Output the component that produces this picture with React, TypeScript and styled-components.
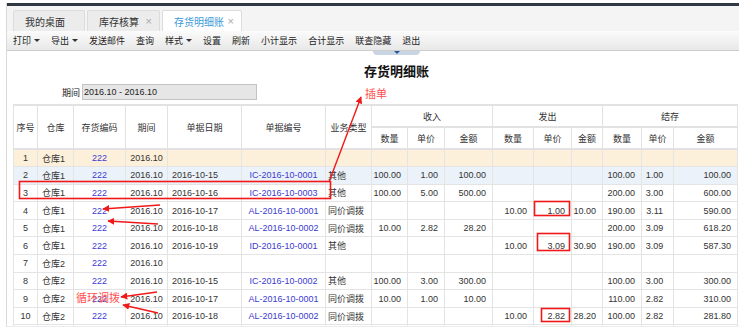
import React from 'react'
import styled, { createGlobalStyle } from 'styled-components'

const GlobalStyle = createGlobalStyle`
  html, body {
    margin: 0;
    padding: 0;
    background: #fff;
  }
  body {
    font-family: "Liberation Sans", "Noto Sans CJK SC", sans-serif;
    color: #333;
  }
`

type Tone = 'beige' | 'blue' | undefined

type Row = {
  no: string
  store: string
  date?: string
  bill?: string
  kind?: string
  nums?: string[]
  tone?: Tone
}

const rows: Row[] = [
  { no: '1', store: '仓库1', tone: 'beige' },
  { no: '2', store: '仓库1', date: '2016-10-15', bill: 'IC-2016-10-0001', kind: '其他', nums: ['100.00', '1.00', '100.00', '', '', '', '100.00', '1.00', '100.00'], tone: 'blue' },
  { no: '3', store: '仓库1', date: '2016-10-16', bill: 'IC-2016-10-0003', kind: '其他', nums: ['100.00', '5.00', '500.00', '', '', '', '200.00', '3.00', '600.00'] },
  { no: '4', store: '仓库1', date: '2016-10-17', bill: 'AL-2016-10-0001', kind: '同价调拨', nums: ['', '', '', '10.00', '1.00', '10.00', '190.00', '3.11', '590.00'] },
  { no: '5', store: '仓库1', date: '2016-10-18', bill: 'AL-2016-10-0002', kind: '同价调拨', nums: ['10.00', '2.82', '28.20', '', '', '', '200.00', '3.09', '618.20'] },
  { no: '6', store: '仓库1', date: '2016-10-19', bill: 'ID-2016-10-0001', kind: '其他', nums: ['', '', '', '10.00', '3.09', '30.90', '190.00', '3.09', '587.30'] },
  { no: '7', store: '仓库2' },
  { no: '8', store: '仓库2', date: '2016-10-15', bill: 'IC-2016-10-0002', kind: '其他', nums: ['100.00', '3.00', '300.00', '', '', '', '100.00', '3.00', '300.00'] },
  { no: '9', store: '仓库2', date: '2016-10-17', bill: 'AL-2016-10-0001', kind: '同价调拨', nums: ['10.00', '1.00', '10.00', '', '', '', '110.00', '2.82', '310.00'] },
  { no: '10', store: '仓库2', date: '2016-10-18', bill: 'AL-2016-10-0002', kind: '同价调拨', nums: ['', '', '', '10.00', '2.82', '28.20', '100.00', '2.82', '281.80'] },
]

const colWidths = [24, 36, 52, 42, 74, 84, 46, 36, 37, 48, 41, 38, 31, 39, 32, 64]

const tools = [
  { label: '打印', menu: true },
  { label: '导出', menu: true },
  { label: '发送邮件' },
  { label: '查询' },
  { label: '样式', menu: true },
  { label: '设置' },
  { label: '刷新' },
  { label: '小计显示' },
  { label: '合计显示' },
  { label: '联查隐藏' },
  { label: '退出' },
]

const App = () => {
  return (
    <Page>
      <GlobalStyle />
      <Frame>
        <TopBar />
        <TabBar>
          <Tab $width={72}>我的桌面</Tab>
          <Tab $width={73}>
            库存核算<Close>×</Close>
          </Tab>
          <Tab $width={80} $active>
            存货明细账<Close>×</Close>
          </Tab>
        </TabBar>
        <Toolbar>
          {tools.map((tool) => (
            <ToolItem key={tool.label}>
              {tool.label}
              {tool.menu && <Caret />}
            </ToolItem>
          ))}
        </Toolbar>
        <HandleRow>
          <Handle>
            <HandleArrow />
          </Handle>
        </HandleRow>

        <Content>
          <Title>存货明细账</Title>
          <PeriodRow>
            <PeriodLabel>期间</PeriodLabel>
            <PeriodInput>2016.10 - 2016.10</PeriodInput>
          </PeriodRow>

          <Grid>
            <colgroup>
              {colWidths.map((w, i) => (
                <col key={i} style={{ width: w }} />
              ))}
            </colgroup>
            <thead>
              <tr>
                <Head rowSpan={2}>序号</Head>
                <Head rowSpan={2}>仓库</Head>
                <Head rowSpan={2}>存货编码</Head>
                <Head rowSpan={2}>期间</Head>
                <Head rowSpan={2}>单据日期</Head>
                <Head rowSpan={2}>单据编号</Head>
                <Head rowSpan={2}>业务类型</Head>
                <Head colSpan={3}>收入</Head>
                <Head colSpan={3}>发出</Head>
                <Head colSpan={3}>结存</Head>
              </tr>
              <tr>
                {['收入', '发出', '结存'].map((g) => (
                  <React.Fragment key={g}>
                    <Head>数量</Head>
                    <Head>单价</Head>
                    <Head>金额</Head>
                  </React.Fragment>
                ))}
              </tr>
            </thead>
            <tbody>
              {rows.map((r) => (
                <BodyRow key={r.no} $tone={r.tone}>
                  <Cell $align="center">{r.no}</Cell>
                  <Cell>{r.store}</Cell>
                  <Cell $align="center" $link>222</Cell>
                  <Cell $align="center">2016.10</Cell>
                  <Cell>{r.date}</Cell>
                  <Cell $align="center" $link>{r.bill}</Cell>
                  <Cell $tight>{r.kind}</Cell>
                  {(r.nums || ['', '', '', '', '', '', '', '', '']).map((n, i) => (
                    <Cell key={i} $align={i === 7 ? 'center' : 'right'} $num>
                      {n}
                    </Cell>
                  ))}
                </BodyRow>
              ))}
              <BodyRow>
                {colWidths.map((_, i) => (
                  <Cell key={i} />
                ))}
              </BodyRow>
            </tbody>
          </Grid>
        </Content>
      </Frame>

      <Marks width="739" height="336" viewBox="0 0 739 336">
        <defs>
          <marker id="head" viewBox="0 0 10 10" refX="9" refY="5" markerWidth="5" markerHeight="5" orient="auto">
            <path d="M0 0 L10 5 L0 10 z" fill="#f01818" />
          </marker>
        </defs>
        <rect x="19.5" y="181.5" width="311" height="17" fill="none" stroke="#f01818" strokeWidth="1.6" />
        <rect x="534.5" y="201.5" width="35" height="14" fill="none" stroke="#f01818" strokeWidth="1.6" />
        <rect x="537.5" y="233.5" width="32" height="17" fill="none" stroke="#f01818" strokeWidth="1.6" />
        <rect x="541.5" y="308.5" width="28" height="13" fill="none" stroke="#f01818" strokeWidth="1.6" />
        <g stroke="#f01818" strokeWidth="1.4" fill="none" markerEnd="url(#head)">
          <line x1="329" y1="182" x2="361" y2="97" />
          <line x1="160" y1="205" x2="103" y2="209" />
          <line x1="158" y1="224" x2="108" y2="221" />
          <line x1="157" y1="292" x2="121" y2="297" />
          <line x1="158" y1="313" x2="123" y2="305" />
        </g>
      </Marks>
      <Note $x={365} $y={86}>插单</Note>
      <Note $x={76} $y={290}>循环调拨</Note>
    </Page>
  )
}

/* FRAME */

const Page = styled.div`
  position: relative;
  width: 739px;
  height: 336px;
  overflow: hidden;
  padding-top: 3px;
  box-sizing: border-box;
`

const Frame = styled.div`
  margin-left: 6px;
  height: 324px;
  border-left: 1px solid #d9d9d9;
  border-bottom: 1px solid #ececec;
  overflow: hidden;
  display: flex;
  flex-direction: column;
  box-sizing: border-box;
`

const TopBar = styled.div`
  height: 3px;
  flex: none;
  background: #2f3843;
`

/* TABS */

const TabBar = styled.div`
  height: 25px;
  flex: none;
  display: flex;
  align-items: flex-end;
  gap: 2px;
  padding-left: 6px;
  background: #f4f4f4;
  box-sizing: border-box;
`

const Tab = styled.div<{ $width: number; $active?: boolean }>`
  width: ${({ $width }) => $width}px;
  height: 21px;
  box-sizing: border-box;
  display: flex;
  align-items: center;
  padding: 0 7px 0 11px;
  border: 1px solid #dcdcdc;
  border-bottom: none;
  border-radius: 2px 2px 0 0;
  background: ${({ $active }) => ($active ? '#fff' : '#ececec')};
  color: ${({ $active }) => ($active ? '#3a9ad9' : '#333')};
  font-family: "Noto Sans CJK SC", sans-serif;
  font-size: 10px;
`

const Close = styled.span`
  margin-left: auto;
  color: #a8a8a8;
  font-family: "Liberation Sans", sans-serif;
  font-size: 11px;
`

/* TOOLBAR */

const Toolbar = styled.div`
  height: 20px;
  flex: none;
  display: flex;
  align-items: center;
  gap: 11px;
  padding-left: 6px;
  background: linear-gradient(#fbfbfb, #e8e8e8);
  border-bottom: 1px solid #cdcdcd;
  box-sizing: border-box;
`

const ToolItem = styled.span`
  display: flex;
  align-items: center;
  gap: 3px;
  font-family: "Noto Sans CJK SC", sans-serif;
  font-size: 9px;
  color: #222;
`

const Caret = styled.i`
  width: 0;
  height: 0;
  border-left: 3px solid transparent;
  border-right: 3px solid transparent;
  border-top: 3px solid #333;
`

const HandleRow = styled.div`
  height: 5px;
  flex: none;
  padding-left: 366px;
`

const Handle = styled.div`
  width: 47px;
  height: 4px;
  display: flex;
  justify-content: center;
  background: #c9d5e2;
  border-radius: 0 0 4px 4px;
`

const HandleArrow = styled.i`
  width: 0;
  height: 0;
  border-left: 3px solid transparent;
  border-right: 3px solid transparent;
  border-top: 3px solid #24589c;
`

/* CONTENT */

const Content = styled.div`
  flex: 1;
  padding-left: 6px;
  display: flex;
  flex-direction: column;
`

const Title = styled.div`
  height: 18px;
  margin-top: 6px;
  padding-left: 351px;
  font-family: "Noto Sans CJK SC", sans-serif;
  font-weight: 700;
  font-size: 13px;
  line-height: 18px;
  color: #111;
`

const PeriodRow = styled.div`
  margin-top: 4px;
  height: 16px;
  display: flex;
  align-items: center;
  gap: 2px;
  padding-left: 49px;
`

const PeriodLabel = styled.span`
  font-family: "Noto Sans CJK SC", sans-serif;
  font-size: 9px;
  color: #222;
`

const PeriodInput = styled.div`
  width: 175px;
  height: 16px;
  box-sizing: border-box;
  padding-left: 1px;
  background: #e6e6e6;
  border: 1px solid #c4c4c4;
  font-size: 9px;
  line-height: 14px;
  color: #222;
`

/* TABLE */

const Grid = styled.table`
  margin-top: 4px;
  width: 724px;
  table-layout: fixed;
  border-collapse: collapse;
  border-top: 2px solid #e2e2e2;
  font-size: 9px;
`

const Head = styled.th`
  height: 20px;
  padding: 0;
  font-weight: 400;
  text-align: center;
  font-family: "Noto Sans CJK SC", sans-serif;
  font-size: 9px;
  color: #333;
  background: #fff;
  border: 1px solid #e2e2e2;
  border-bottom-width: 2px;
`

const BodyRow = styled.tr<{ $tone?: Tone }>`
  height: 17.6px;
  background: ${({ $tone }) => ($tone === 'beige' ? '#fdf0da' : $tone === 'blue' ? '#ebf2f9' : '#fff')};
`

const Cell = styled.td<{ $align?: 'left' | 'center' | 'right'; $link?: boolean; $num?: boolean; $tight?: boolean }>`
  padding: ${({ $num, $tight }) => ($num ? '0 6px 0 0' : $tight ? '0 0 0 2px' : '0 4px')};
  text-align: ${({ $align }) => $align || 'left'};
  white-space: nowrap;
  overflow: hidden;
  border: 1px solid #e4e4e4;
  font-family: "Liberation Sans", "Noto Sans CJK SC", sans-serif;
  font-size: 9px;
  color: ${({ $link }) => ($link ? '#3b3bd2' : '#333')};
`

/* ANNOTATIONS */

const Marks = styled.svg`
  position: absolute;
  left: 0;
  top: 0;
  pointer-events: none;
`

const Note = styled.span<{ $x: number; $y: number }>`
  position: absolute;
  left: ${({ $x }) => $x}px;
  top: ${({ $y }) => $y}px;
  font-family: "Noto Sans CJK SC", sans-serif;
  font-size: 11px;
  line-height: 14px;
  color: #ff4d4d;
`

export default App
